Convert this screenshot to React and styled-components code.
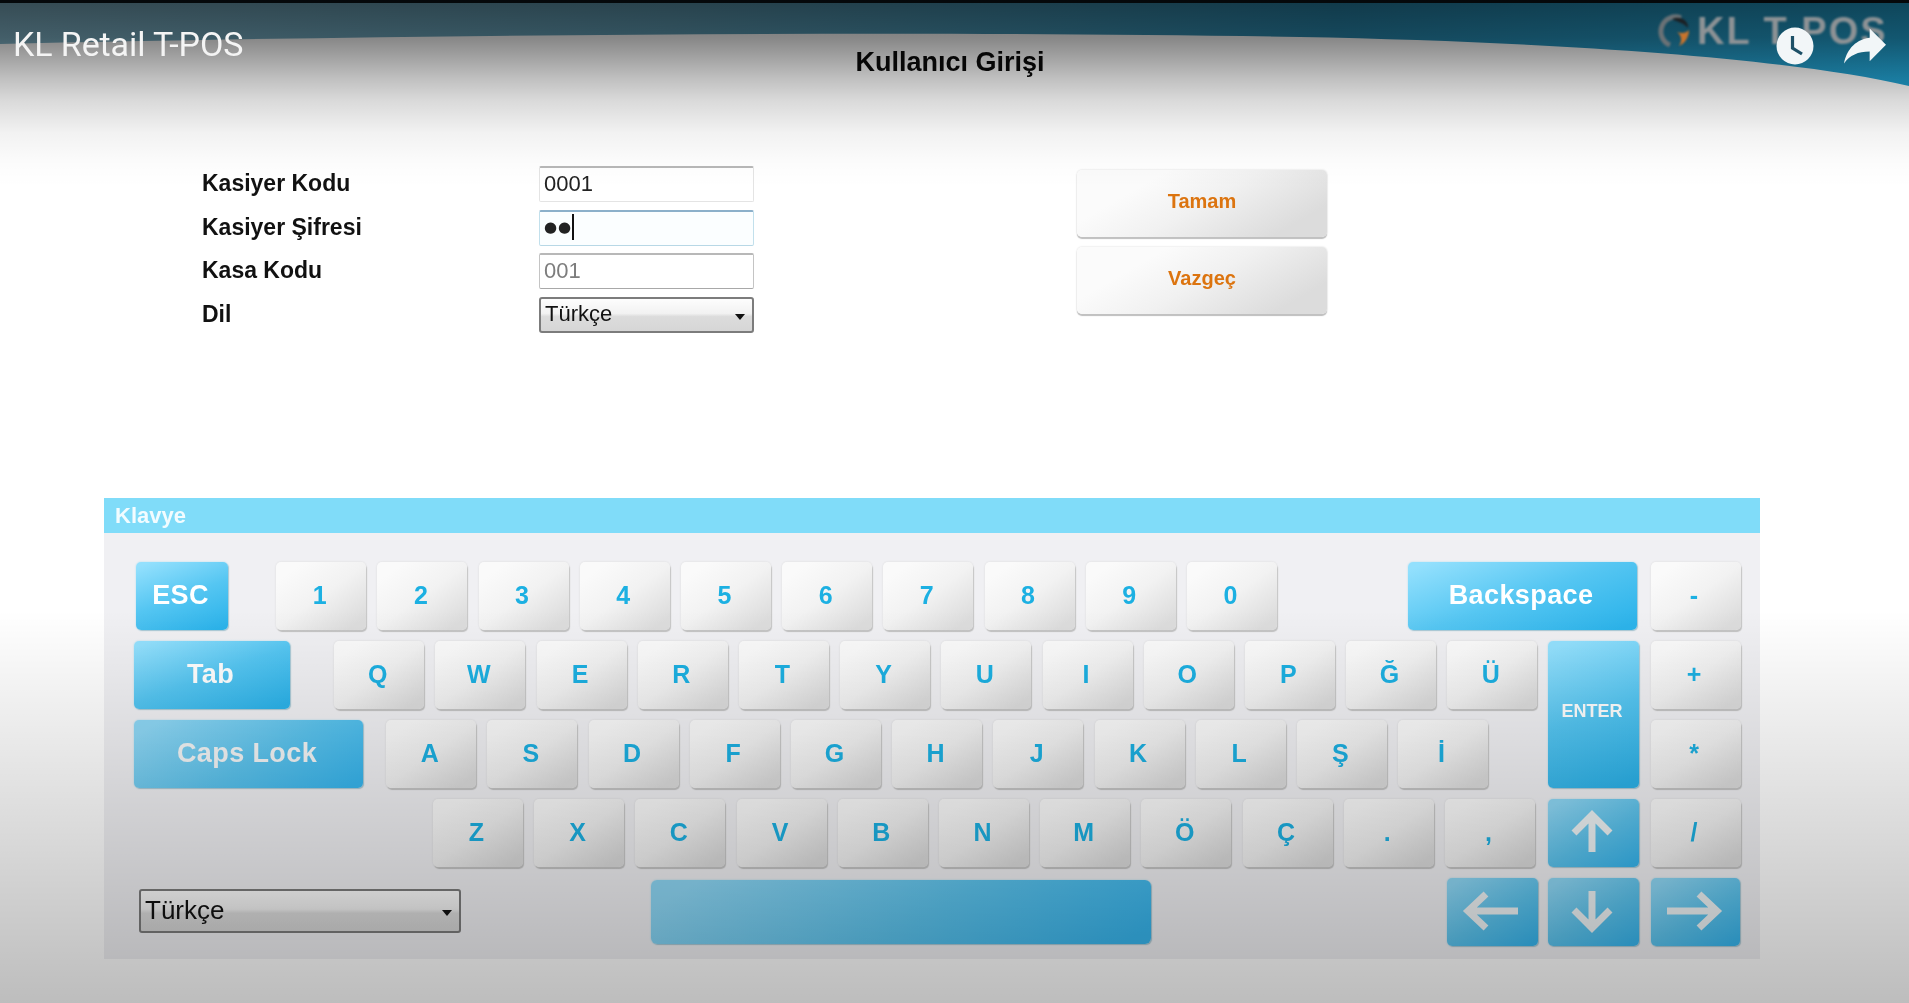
import React from "react";
import styled, { createGlobalStyle } from "styled-components";

const Global = createGlobalStyle`
  html, body { margin: 0; padding: 0; background: #fff; }
  body { font-family: "Liberation Sans", Arial, sans-serif; overflow: hidden; }
`;

const Page = styled.div`
  position: relative;
  width: 1909px;
  height: 1003px;
  overflow: hidden;
  background: #fff;
  filter: blur(0.45px);
  &::after {
    content: "";
    position: absolute;
    inset: 0;
    z-index: 1;
    pointer-events: none;
    background:
      linear-gradient(180deg, rgba(0,0,0,.58) 0, rgba(0,0,0,.47) 38px, rgba(0,0,0,.25) 78px, rgba(0,0,0,.15) 100px, rgba(0,0,0,.05) 133px, rgba(0,0,0,.01) 165px, rgba(0,0,0,0) 188px),
      linear-gradient(180deg, rgba(0,0,0,0) 610px, rgba(0,0,0,.26) 1003px);
  }
`;

const Swoosh = styled.svg`
  position: absolute;
  left: 0;
  top: 0;
  display: block;
`;

const Brand = styled.div`
  position: absolute;
  z-index: 2;
  left: 13px;
  top: 24px;
  font: 400 34px/40px Roboto, sans-serif;
  letter-spacing: -0.1px;
  color: #f4f4f4;
`;

const Logo = styled.div`
  position: absolute;
  z-index: 2;
  left: 1658px;
  top: 12px;
  display: flex;
  align-items: center;
  gap: 5px;
  filter: blur(1px);
`;

const LogoText = styled.span`
  font: 700 38px/38px "Liberation Sans", sans-serif;
  letter-spacing: 2px;
  color: #8d9295;
  white-space: pre;
`;

const OverIcons = styled.div`
  position: absolute;
  z-index: 2;
  left: 1775px;
  top: 25px;
  display: flex;
  align-items: center;
  gap: 29px;
`;

const TitleBar = styled.header`
  position: relative;
  height: 166px;
  padding: 45px 9px 0 0;
  box-sizing: border-box;
  text-align: center;
`;

const Title = styled.h1`
  margin: 0;
  font: 700 27px/34px "Liberation Sans", sans-serif;
  color: #0a0a0a;
`;

const FormArea = styled.section`
  position: relative;
  display: flex;
  align-items: flex-start;
  margin-left: 202px;
`;

const FormGrid = styled.div`
  display: grid;
  grid-template-columns: 337px 215px;
  grid-auto-rows: 36px;
  row-gap: 7.7px;
  align-items: center;
`;

const Label = styled.label`
  padding-bottom: 2px;
  font: 700 23px/30px "Liberation Sans", sans-serif;
  color: #111;
`;

const Field = styled.div`
  display: flex;
  align-items: center;
  height: 36px;
  box-sizing: border-box;
  padding: 0 0 2px 4px;
  background: ${(p) => (p.$focus ? "#fbfeff" : "#fff")};
  border: 1px solid ${(p) => (p.$focus ? "#c2e0ec" : p.$disabled ? "#c4c4c4" : "#e4e4e4")};
  border-top: 2px solid ${(p) => (p.$focus ? "#8cb0ca" : "#b8b8b8")};
  border-bottom-color: ${(p) => (p.$disabled ? "#a8a8a8" : p.$focus ? "#b8d8e6" : "#e4e4e4")};
  border-radius: 2px;
  font: 400 22px/30px "Liberation Sans", sans-serif;
  color: ${(p) => (p.$disabled ? "#7d7d7d" : "#222")};
`;

const Dots = styled.span`
  font: 400 15px/20px "DejaVu Sans", sans-serif;
  letter-spacing: 1px;
`;

const Caret = styled.span`
  width: 2px;
  height: 26px;
  background: #111;
`;

const SelectBox = styled.div`
  position: relative;
  display: flex;
  align-items: center;
  box-sizing: border-box;
  width: ${(p) => p.$w}px;
  height: ${(p) => p.$h}px;
  padding: 0 0 2px 4px;
  background: linear-gradient(180deg, #fdfdfd 0%, #f2f2f2 45%, #dcdcdc 55%, #d6d6d6 100%);
  border: 2px solid #7c7c7c;
  border-radius: 3px;
  font: 400 ${(p) => p.$size}px/30px "Liberation Sans", sans-serif;
  color: #111;
  &::after {
    content: "";
    position: absolute;
    right: 7px;
    top: 50%;
    margin-top: -1px;
    border-left: 5px solid transparent;
    border-right: 5px solid transparent;
    border-top: 6px solid #111;
  }
`;

const SelectSlot = styled.div`
  flex: none;
  margin: 0 0 3px 5px;
`;

const ActionColumn = styled.div`
  display: flex;
  flex-direction: column;
  gap: 10px;
  margin-left: 323px;
  padding-top: 4px;
`;

const ActionButton = styled.button`
  width: 250px;
  height: 67px;
  padding: 0 0 6px;
  border: 0;
  border-radius: 5px;
  background: linear-gradient(150deg, #fbfbfb 25%, #f1f1f1 50%, #dcdcdc 85%);
  box-shadow: 0 0 2px #d0d0d0, 0 2px 1px #bcbcbc;
  font: 700 20px/24px "Liberation Sans", sans-serif;
  color: #dc740f;
`;

const Panel = styled.section`
  position: relative;
  margin: 165px 0 0 104px;
  width: 1656px;
  background: #f0f0f3;
`;

const PanelHead = styled.div`
  height: 35px;
  padding-left: 11px;
  background: #80dcf9;
  font: 700 22px/35px "Liberation Sans", sans-serif;
  color: #f2fcff;
`;

const KeyGrid = styled.div`
  display: grid;
  grid-template-columns: 1402.5px 91px 89px;
  grid-template-rows: repeat(5, 68px);
  column-gap: 11.5px;
  row-gap: 11px;
  padding: 29px 0 13px 30px;
`;

const KeyRow = styled.div`
  display: flex;
  align-items: center;
  gap: 11.2px;
  grid-column: ${(p) => p.$span || "1"};
`;

const Key = styled.button`
  flex: none;
  width: ${(p) => p.$w || 90}px;
  height: 68px;
  margin-left: ${(p) => p.$ml || 0}px;
  padding: 0 3px 2px 0;
  border: 0;
  border-radius: 5px;
  background: linear-gradient(145deg, #fafafa 15%, #f2f2f2 50%, #dcdcdc 90%);
  box-shadow: 0 0 2px #d6d6d6, 1px 2px 1px #c0c0c0;
  font: 700 25px/30px "Liberation Sans", sans-serif;
  color: #1cb0e2;
`;

const BlueKey = styled(Key)`
  display: flex;
  align-items: center;
  justify-content: center;
  height: ${(p) => p.$h || 68}px;
  grid-row: ${(p) => p.$row || "auto"};
  grid-column: ${(p) => p.$col || "auto"};
  width: ${(p) => (p.$col ? "100%" : `${p.$w || 90}px`)};
  padding-bottom: ${(p) => (p.$size ? 8 : 2)}px;
  background: ${(p) =>
    p.$muted
      ? "linear-gradient(150deg, #8ed8f6 8%, #5cc4ee 55%, #38b6ee 95%)"
      : "linear-gradient(160deg, #93e0fd 5%, #55c6f2 50%, #2cb3ea 95%)"};
  box-shadow: 0 0 2px #a6dcf0, 1px 1px 1px #a8c0ca;
  font-size: ${(p) => p.$size || 27}px;
  letter-spacing: ${(p) => (p.$size ? 0 : 0.4)}px;
  color: ${(p) => (p.$muted ? "#f4f6f7" : "#fff")};
`;

const PlainKey = styled(Key)`
  grid-column: ${(p) => p.$col};
`;

const SpaceBar = styled(BlueKey)`
  height: 64px;
  margin-left: 179px;
  margin-right: 285px;
  border-radius: 6px;
`;

const ArrowIcon = styled.svg`
  display: block;
  fill: none;
  stroke: #eef3f5;
  stroke-width: 7;
`;

const arrows = {
  up: "M24 42V5M6 23L24 5L42 23",
  down: "M24 2V39M6 21L24 39L42 21",
  left: "M56 20H6M24 3L6 20L24 37",
  right: "M2 20H52M34 3L52 20L34 37",
};

function Arrow({ dir }) {
  const flat = dir === "left" || dir === "right";
  return (
    <ArrowIcon width={flat ? 58 : 48} height={flat ? 40 : 44} viewBox={flat ? "0 0 58 40" : "0 0 48 44"}>
      <path d={arrows[dir]} />
    </ArrowIcon>
  );
}

const row1 = "1234567890".split("");
const row2 = "QWERTYUIOPĞÜ".split("");
const row3 = "ASDFGHJKLŞİ".split("");
const row4 = "ZXCVBNMÖÇ.,".split("");

export default function App() {
  return (
    <Page>
      <Global />
      <Swoosh width="1909" height="100" viewBox="0 0 1909 100">
        <defs>
          <linearGradient id="teal" x1="0" x2="1" y1="0" y2="0">
            <stop offset="0" stopColor="#7fb2c6" />
            <stop offset="0.35" stopColor="#5f9cb4" />
            <stop offset="0.7" stopColor="#2888ae" />
            <stop offset="1" stopColor="#22a4d4" />
          </linearGradient>
        </defs>
        <path d="M0 44C400 35 900 30 1300 37C1560 42 1790 58 1909 86V0H0Z" fill="url(#teal)" />
        <rect x="0" y="0" width="1909" height="3" fill="#0b141a" />
      </Swoosh>
      <Logo>
        <svg width="34" height="34" viewBox="0 0 34 34" fill="none">
          <path d="M23 4A14 14 0 0 0 12 31" stroke="#6b7276" strokeWidth="5" />
          <path d="M14 5C22 1 31 7 30 14C25 8 19 8 14 5Z" fill="#1c1f22" />
          <path d="M31 16C31 24 26 30 21 32C25 26 23 21 19 18C24 20 28 19 31 16Z" fill="#c8742c" />
        </svg>
        <LogoText>{"KL T-POS"}</LogoText>
      </Logo>
      <Brand>KL Retail T-POS</Brand>
      <OverIcons>
        <svg width="40" height="40" viewBox="0 0 40 40">
          <circle cx="20" cy="20" r="18.5" fill="#f2f6f8" />
          <path d="M17.5 10V22L27 28" fill="none" stroke="#1d5067" strokeWidth="3.2" />
        </svg>
        <svg width="42" height="42" viewBox="3 4 18 17">
          <path d="M14 9V5l7 7-7 7v-4.1c-5 0-8.5 1.6-11 5.1 1-5 4-10 11-11z" fill="#f2f6f8" />
        </svg>
      </OverIcons>

      <TitleBar>
        <Title>Kullanıcı Girişi</Title>
      </TitleBar>

      <FormArea>
        <FormGrid>
          <Label>Kasiyer Kodu</Label>
          <Field>0001</Field>
          <Label>Kasiyer Şifresi</Label>
          <Field $focus>
            <Dots>●●</Dots>
            <Caret />
          </Field>
          <Label>Kasa Kodu</Label>
          <Field $disabled>001</Field>
          <Label>Dil</Label>
          <SelectBox $w={215} $h={36} $size={22}>Türkçe</SelectBox>
        </FormGrid>
        <ActionColumn>
          <ActionButton>Tamam</ActionButton>
          <ActionButton>Vazgeç</ActionButton>
        </ActionColumn>
      </FormArea>

      <Panel>
        <PanelHead>Klavye</PanelHead>
        <KeyGrid>
          <KeyRow $span="1 / 3">
            <BlueKey $w={92} $ml={2}>ESC</BlueKey>
            <Key $ml={37}>{row1[0]}</Key>
            {row1.slice(1).map((k) => (
              <Key key={k}>{k}</Key>
            ))}
            <BlueKey $w={229} $ml={120}>Backspace</BlueKey>
          </KeyRow>
          <PlainKey $col="3">-</PlainKey>

          <KeyRow>
            <BlueKey $w={156}>Tab</BlueKey>
            <Key $ml={33}>{row2[0]}</Key>
            {row2.slice(1).map((k) => (
              <Key key={k}>{k}</Key>
            ))}
          </KeyRow>
          <BlueKey $col="2" $row="2 / 4" $h={147} $size={18}>ENTER</BlueKey>
          <PlainKey $col="3">+</PlainKey>

          <KeyRow>
            <BlueKey $w={229} $muted>Caps Lock</BlueKey>
            <Key $ml={12}>{row3[0]}</Key>
            {row3.slice(1).map((k) => (
              <Key key={k}>{k}</Key>
            ))}
          </KeyRow>
          <PlainKey $col="3">*</PlainKey>

          <KeyRow>
            <Key $ml={299}>{row4[0]}</Key>
            {row4.slice(1).map((k) => (
              <Key key={k}>{k}</Key>
            ))}
          </KeyRow>
          <BlueKey $col="2" $muted><Arrow dir="up" /></BlueKey>
          <PlainKey $col="3">/</PlainKey>

          <KeyRow>
            <SelectSlot>
              <SelectBox $w={322} $h={44} $size={26}>Türkçe</SelectBox>
            </SelectSlot>
            <SpaceBar $muted $w={500} aria-label="space" />
            <BlueKey $w={91} $muted><Arrow dir="left" /></BlueKey>
          </KeyRow>
          <BlueKey $col="2" $muted><Arrow dir="down" /></BlueKey>
          <BlueKey $col="3" $muted><Arrow dir="right" /></BlueKey>
        </KeyGrid>
      </Panel>
    </Page>
  );
}
